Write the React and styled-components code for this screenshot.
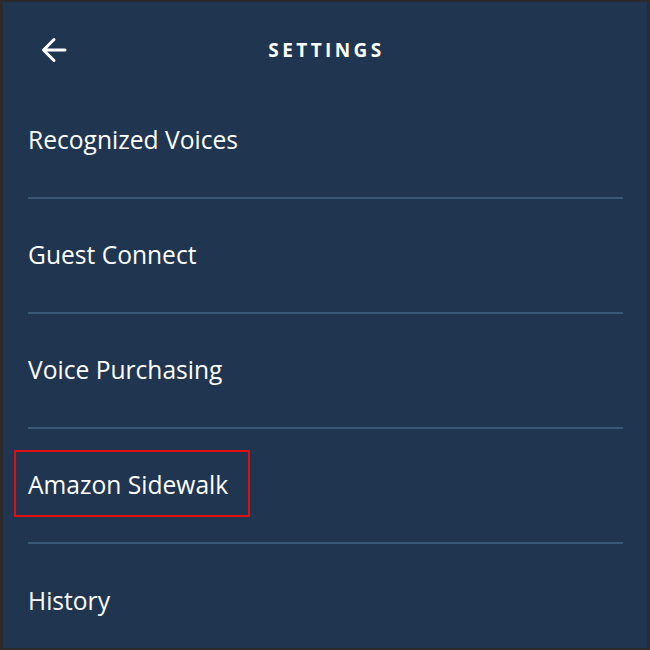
import styled, { createGlobalStyle } from "styled-components";

const GlobalStyle = createGlobalStyle`
  html, body {
    margin: 0;
    padding: 0;
    background: #2b2b2b;
  }
  * {
    box-sizing: border-box;
  }
`;

const items = [
  { label: "Recognized Voices" },
  { label: "Guest Connect" },
  { label: "Voice Purchasing" },
  { label: "Amazon Sidewalk", highlighted: true },
  { label: "History", last: true },
];

const BackArrow = () => (
  <svg width="28" height="28" viewBox="0 0 28 28" fill="none">
    <path
      d="M25 14H4M14 3.5L3.5 14L14 24.5"
      stroke="#ffffff"
      strokeWidth="3"
      strokeLinecap="round"
      strokeLinejoin="round"
    />
  </svg>
);

const App = () => {
  return (
    <>
      <GlobalStyle />
      <Frame>
        <Header>
          <BackButton aria-label="Back">
            <BackArrow />
          </BackButton>
          <Title>SETTINGS</Title>
        </Header>
        <List>
          {items.map((item) => (
            <Row key={item.label} $last={item.last}>
              <Label $highlighted={item.highlighted}>{item.label}</Label>
            </Row>
          ))}
        </List>
      </Frame>
    </>
  );
};

const Frame = styled.div`
  width: 650px;
  height: 650px;
  overflow: hidden;
  background: #1f3550;
  border-style: solid;
  border-color: #2b2b2b;
  border-width: 2px 3px 2px 3px;
  font-family: "Open Sans", "Noto Sans", sans-serif;
  color: #ffffff;
  display: flex;
  flex-direction: column;
`;

const Header = styled.header`
  position: relative;
  height: 82px;
  padding-top: 14px;
  display: flex;
  align-items: center;
  justify-content: center;
  flex-shrink: 0;
`;

const BackButton = styled.button`
  position: absolute;
  left: 37px;
  top: 34px;
  background: none;
  border: none;
  padding: 0;
  display: flex;
  cursor: pointer;
`;

const Title = styled.h1`
  margin: 0;
  font-size: 19px;
  font-weight: 700;
  letter-spacing: 3.4px;
  padding-left: 3px;
`;

const List = styled.div`
  display: flex;
  flex-direction: column;
  padding: 0 24px 0 25px;
`;

const Row = styled.div`
  height: 115px;
  flex-shrink: 0;
  display: flex;
  align-items: center;
  border-bottom: ${(p) => (p.$last ? "none" : "2px solid #3a5878")};
`;

const Label = styled.span`
  position: relative;
  font-size: 24.6px;
  line-height: 32px;
  padding-bottom: 2px;

  &::after {
    content: "";
    display: ${(p) => (p.$highlighted ? "block" : "none")};
    position: absolute;
    left: -14px;
    right: -22px;
    top: -19px;
    bottom: -14px;
    border: 2px solid #e01010;
  }
`;

export default App;
